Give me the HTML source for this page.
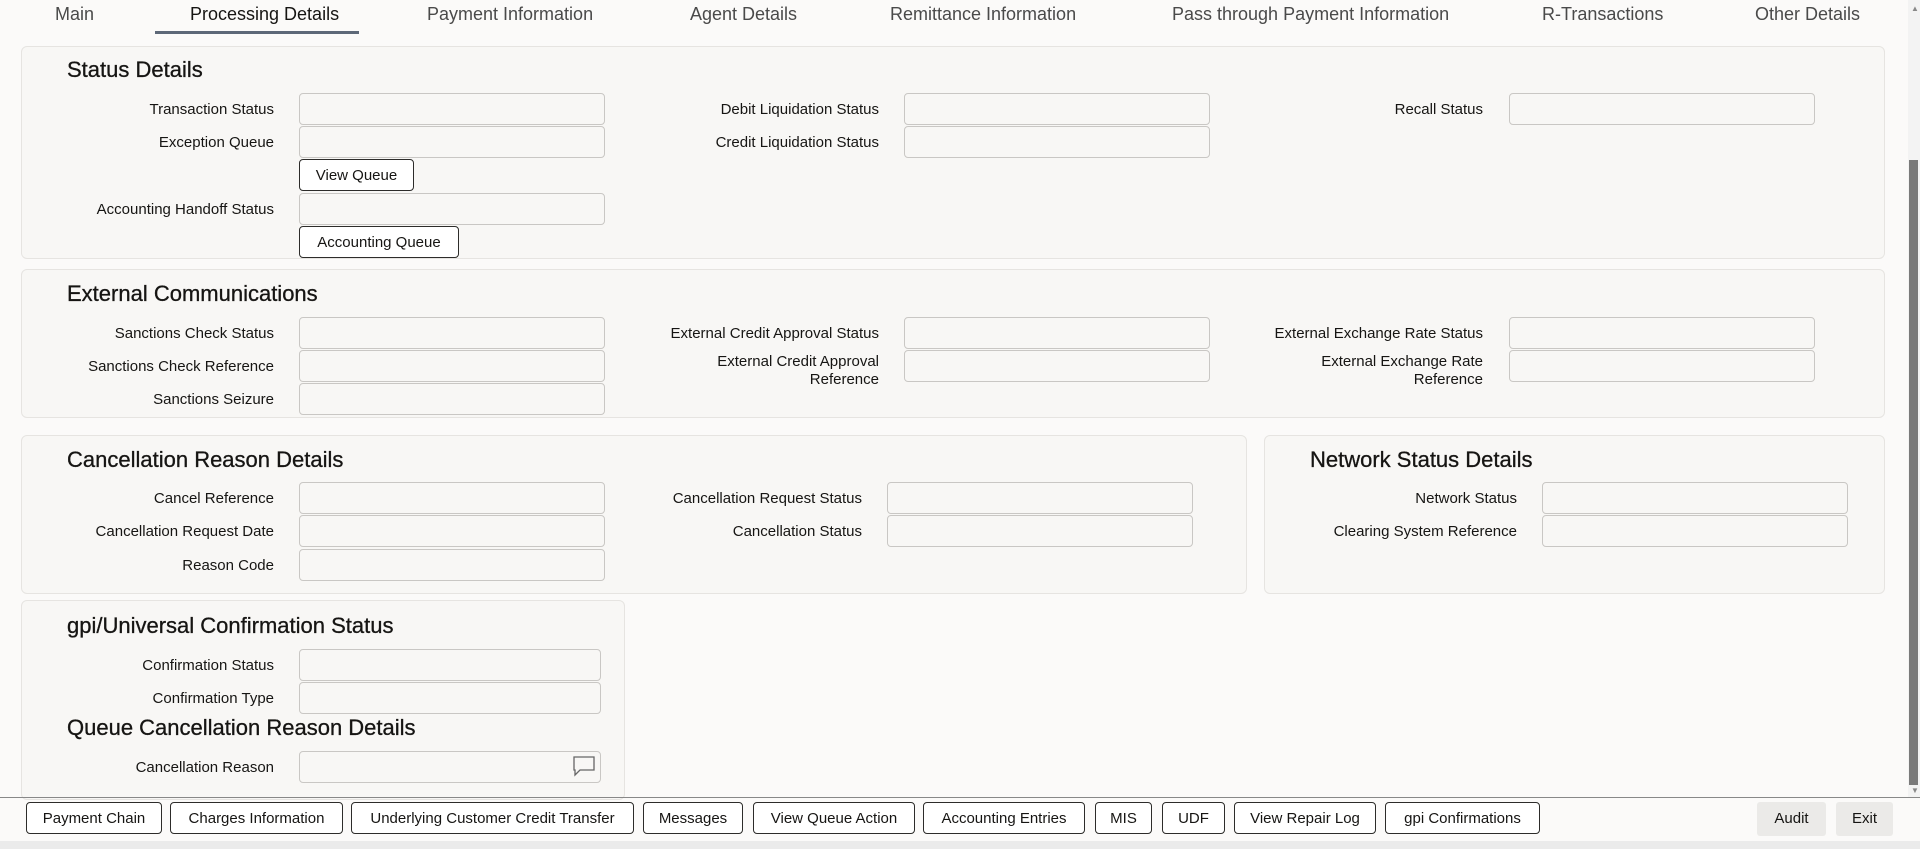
<!DOCTYPE html>
<html><head><meta charset="utf-8">
<style>
*{box-sizing:border-box;margin:0;padding:0}
body{width:1920px;height:849px;overflow:hidden;background:#fbfaf9;font-family:"Liberation Sans",sans-serif;color:#161513;position:relative}
.a{position:absolute}
.tab{position:absolute;top:4px;font-size:18px;color:#4a4a4a;white-space:nowrap}
.tab.act{color:#161513}
.panel{position:absolute;background:#f8f7f5;border:1px solid #e6e4e1;border-radius:6px}
.h{position:absolute;font-size:22px;color:#161513;white-space:nowrap;-webkit-text-stroke:0.3px #161513}
.l{position:absolute;font-size:15px;text-align:right;white-space:nowrap;line-height:18px;margin-top:1px}
.i{position:absolute;height:32px;border:1px solid #c9c7c4;border-radius:4px;background:#f8f7f5}
.b{position:absolute;border:1px solid #2d2c2a;border-radius:4px;background:#fff;font-size:15px;text-align:center;line-height:32px;white-space:nowrap;height:32px}
.g{position:absolute;background:#ebeae8;border-radius:3px;font-size:15px;text-align:center;line-height:34px;height:34px}
</style></head><body>
<div class="tab" style="left:55px">Main</div>
<div class="tab act" style="left:190px">Processing Details</div>
<div class="a" style="left:155px;top:31px;width:204px;height:3px;background:#5d6878"></div>
<div class="tab" style="left:427px">Payment Information</div>
<div class="tab" style="left:690px">Agent Details</div>
<div class="tab" style="left:890px">Remittance Information</div>
<div class="tab" style="left:1172px">Pass through Payment Information</div>
<div class="tab" style="left:1542px">R-Transactions</div>
<div class="tab" style="left:1755px">Other Details</div>

<div class="panel" style="left:21px;top:46px;width:1864px;height:213px"></div>
<div class="h" style="left:67px;top:57px">Status Details</div>
<div class="l" style="right:1646px;top:100px">Transaction Status</div>
<div class="i" style="left:299px;top:93px;width:306px"></div>
<div class="l" style="right:1646px;top:133px">Exception Queue</div>
<div class="i" style="left:299px;top:126px;width:306px"></div>
<div class="b" style="left:299px;top:159px;width:115px">View Queue</div>
<div class="l" style="right:1646px;top:200px">Accounting Handoff Status</div>
<div class="i" style="left:299px;top:193px;width:306px"></div>
<div class="b" style="left:299px;top:226px;width:160px">Accounting Queue</div>
<div class="l" style="right:1041px;top:100px">Debit Liquidation Status</div>
<div class="i" style="left:904px;top:93px;width:306px"></div>
<div class="l" style="right:1041px;top:133px">Credit Liquidation Status</div>
<div class="i" style="left:904px;top:126px;width:306px"></div>
<div class="l" style="right:437px;top:100px">Recall Status</div>
<div class="i" style="left:1509px;top:93px;width:306px"></div>

<div class="panel" style="left:21px;top:269px;width:1864px;height:149px"></div>
<div class="h" style="left:67px;top:281px">External Communications</div>
<div class="l" style="right:1646px;top:324px">Sanctions Check Status</div>
<div class="i" style="left:299px;top:317px;width:306px"></div>
<div class="l" style="right:1646px;top:357px">Sanctions Check Reference</div>
<div class="i" style="left:299px;top:350px;width:306px"></div>
<div class="l" style="right:1646px;top:390px">Sanctions Seizure</div>
<div class="i" style="left:299px;top:383px;width:306px"></div>
<div class="l" style="right:1041px;top:324px">External Credit Approval Status</div>
<div class="i" style="left:904px;top:317px;width:306px"></div>
<div class="l" style="right:1041px;top:352px">External Credit Approval<br>Reference</div>
<div class="i" style="left:904px;top:350px;width:306px"></div>
<div class="l" style="right:437px;top:324px">External Exchange Rate Status</div>
<div class="i" style="left:1509px;top:317px;width:306px"></div>
<div class="l" style="right:437px;top:352px">External Exchange Rate<br>Reference</div>
<div class="i" style="left:1509px;top:350px;width:306px"></div>

<div class="panel" style="left:21px;top:435px;width:1226px;height:159px"></div>
<div class="h" style="left:67px;top:447px">Cancellation Reason Details</div>
<div class="l" style="right:1646px;top:489px">Cancel Reference</div>
<div class="i" style="left:299px;top:482px;width:306px"></div>
<div class="l" style="right:1646px;top:522px">Cancellation Request Date</div>
<div class="i" style="left:299px;top:515px;width:306px"></div>
<div class="l" style="right:1646px;top:556px">Reason Code</div>
<div class="i" style="left:299px;top:549px;width:306px"></div>
<div class="l" style="right:1058px;top:489px">Cancellation Request Status</div>
<div class="i" style="left:887px;top:482px;width:306px"></div>
<div class="l" style="right:1058px;top:522px">Cancellation Status</div>
<div class="i" style="left:887px;top:515px;width:306px"></div>

<div class="panel" style="left:1264px;top:435px;width:621px;height:159px"></div>
<div class="h" style="left:1310px;top:447px">Network Status Details</div>
<div class="l" style="right:403px;top:489px">Network Status</div>
<div class="i" style="left:1542px;top:482px;width:306px"></div>
<div class="l" style="right:403px;top:522px">Clearing System Reference</div>
<div class="i" style="left:1542px;top:515px;width:306px"></div>

<div class="panel" style="left:21px;top:600px;width:604px;height:200px"></div>
<div class="h" style="left:67px;top:613px">gpi/Universal Confirmation Status</div>
<div class="l" style="right:1646px;top:656px">Confirmation Status</div>
<div class="i" style="left:299px;top:649px;width:302px"></div>
<div class="l" style="right:1646px;top:689px">Confirmation Type</div>
<div class="i" style="left:299px;top:682px;width:302px"></div>
<div class="h" style="left:67px;top:715px">Queue Cancellation Reason Details</div>
<div class="l" style="right:1646px;top:758px">Cancellation Reason</div>
<div class="i" style="left:299px;top:751px;width:302px"></div>
<svg class="a" style="left:572px;top:755px" width="24" height="22" viewBox="0 0 24 22"><path d="M2 2H22V15H8L3 20V15H2Z" fill="none" stroke="#666" stroke-width="1.3"/></svg>

<div class="a" style="left:1908px;top:0;width:12px;height:797px;background:#f3f3f3"></div>
<div class="a" style="left:1909px;top:160px;width:9px;height:625px;background:#7a7a7a"></div>
<div class="a" style="left:1911px;top:4px;font-size:8px;color:#888">▲</div>
<div class="a" style="left:1911px;top:786px;font-size:8px;color:#888">▼</div>

<div class="a" style="left:0;top:797px;width:1920px;height:1px;background:#888"></div>
<div class="a" style="left:0;top:841px;width:1920px;height:8px;background:#ebebeb"></div>
<div class="b" style="left:26px;top:802px;width:136px">Payment Chain</div>
<div class="b" style="left:170px;top:802px;width:173px">Charges Information</div>
<div class="b" style="left:351px;top:802px;width:283px">Underlying Customer Credit Transfer</div>
<div class="b" style="left:643px;top:802px;width:100px">Messages</div>
<div class="b" style="left:753px;top:802px;width:162px">View Queue Action</div>
<div class="b" style="left:923px;top:802px;width:162px">Accounting Entries</div>
<div class="b" style="left:1095px;top:802px;width:57px">MIS</div>
<div class="b" style="left:1162px;top:802px;width:63px">UDF</div>
<div class="b" style="left:1234px;top:802px;width:142px">View Repair Log</div>
<div class="b" style="left:1385px;top:802px;width:155px">gpi Confirmations</div>
<div class="g" style="left:1757px;top:802px;width:69px">Audit</div>
<div class="g" style="left:1836px;top:802px;width:57px">Exit</div>
</body></html>
